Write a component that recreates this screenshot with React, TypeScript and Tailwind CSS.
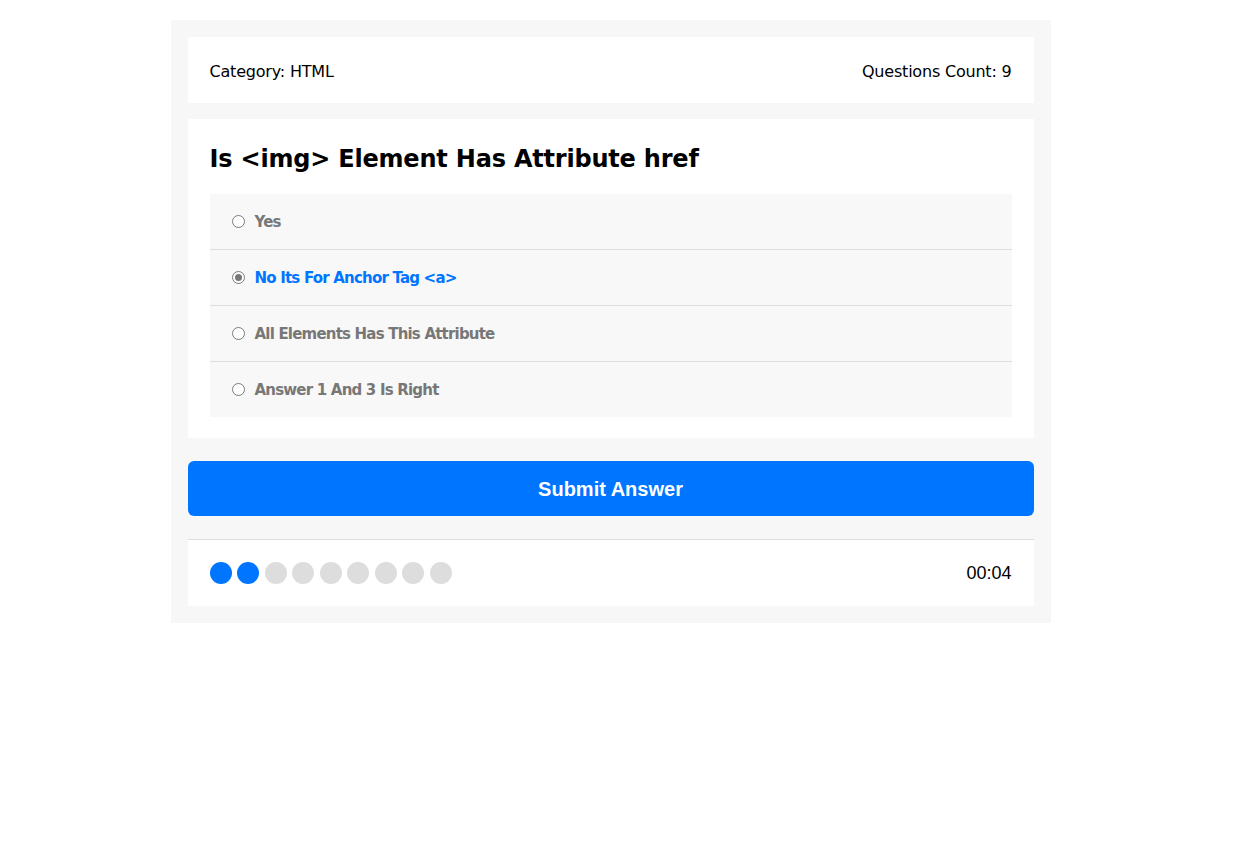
import React, { useState } from "react";

const answers = [
  "Yes",
  "No Its For Anchor Tag <a>",
  "All Elements Has This Attribute",
  "Answer 1 And 3 Is Right",
];

const App: React.FC = () => {
  const [picked, setPicked] = useState(1);
  const total = 9;
  const done = 2;

  return (
    <div className="min-h-screen bg-white pt-5 pr-[15px] font-['DejaVu_Sans',Verdana,sans-serif]">
      <div className="mx-auto w-[880px] bg-[#f7f7f7] p-[17px]">
        {/* info */}
        <div className="flex h-[66px] items-center justify-between bg-white px-[22px] pt-[3px] text-[16px] text-black tracking-[-0.2px]">
          <span>Category: HTML</span>
          <span>Questions Count: 9</span>
        </div>

        {/* question */}
        <div className="mt-4 bg-white px-[22px] pt-[22px] pb-[21px]">
          <h2 className="m-0 text-[24px] leading-[36px] font-bold tracking-[-0.2px] text-black">
            Is &lt;img&gt; Element Has Attribute href
          </h2>
          <div className="mt-[17px] bg-[#f8f8f8]">
            {answers.map((a, i) => {
              const last = i === answers.length - 1;
              return (
                <label
                  key={a}
                  onClick={() => setPicked(i)}
                  className={`flex cursor-pointer items-center gap-[10px] px-[22px] ${
                    last ? "h-[55px]" : "h-[56px] border-b border-[#dedede]"
                  }`}
                >
                  <span className="flex h-[13px] w-[13px] items-center justify-center rounded-full border border-[#7a7a7a] bg-white">
                    {picked === i && <span className="h-[7px] w-[7px] rounded-full bg-[#777]" />}
                  </span>
                  <span
                    className={`pt-[2px] text-[15px] font-bold tracking-[-0.8px] ${
                      picked === i ? "text-[#0075ff]" : "text-[#777]"
                    }`}
                  >
                    {a}
                  </span>
                </label>
              );
            })}
          </div>
        </div>

        {/* submit */}
        <button className="mt-[23px] block h-[55px] w-full rounded-[6px] bg-[#0075ff] font-['Liberation_Sans',Arial,sans-serif] text-[20px] font-bold text-white">
          Submit Answer
        </button>

        {/* progress */}
        <div className="mt-[23px] flex h-[67px] items-center justify-between border-t border-[#dedede] bg-white px-[22px]">
          <div className="flex gap-[5.5px]">
            {Array.from({ length: total }).map((_, i) => (
              <span
                key={i}
                className={`h-[22px] w-[22px] rounded-full ${i < done ? "bg-[#0075ff]" : "bg-[#dddddd]"}`}
              />
            ))}
          </div>
          <span className="font-['Liberation_Sans',Arial,sans-serif] text-[18px] text-black">00:04</span>
        </div>
      </div>
    </div>
  );
};

export default App;
